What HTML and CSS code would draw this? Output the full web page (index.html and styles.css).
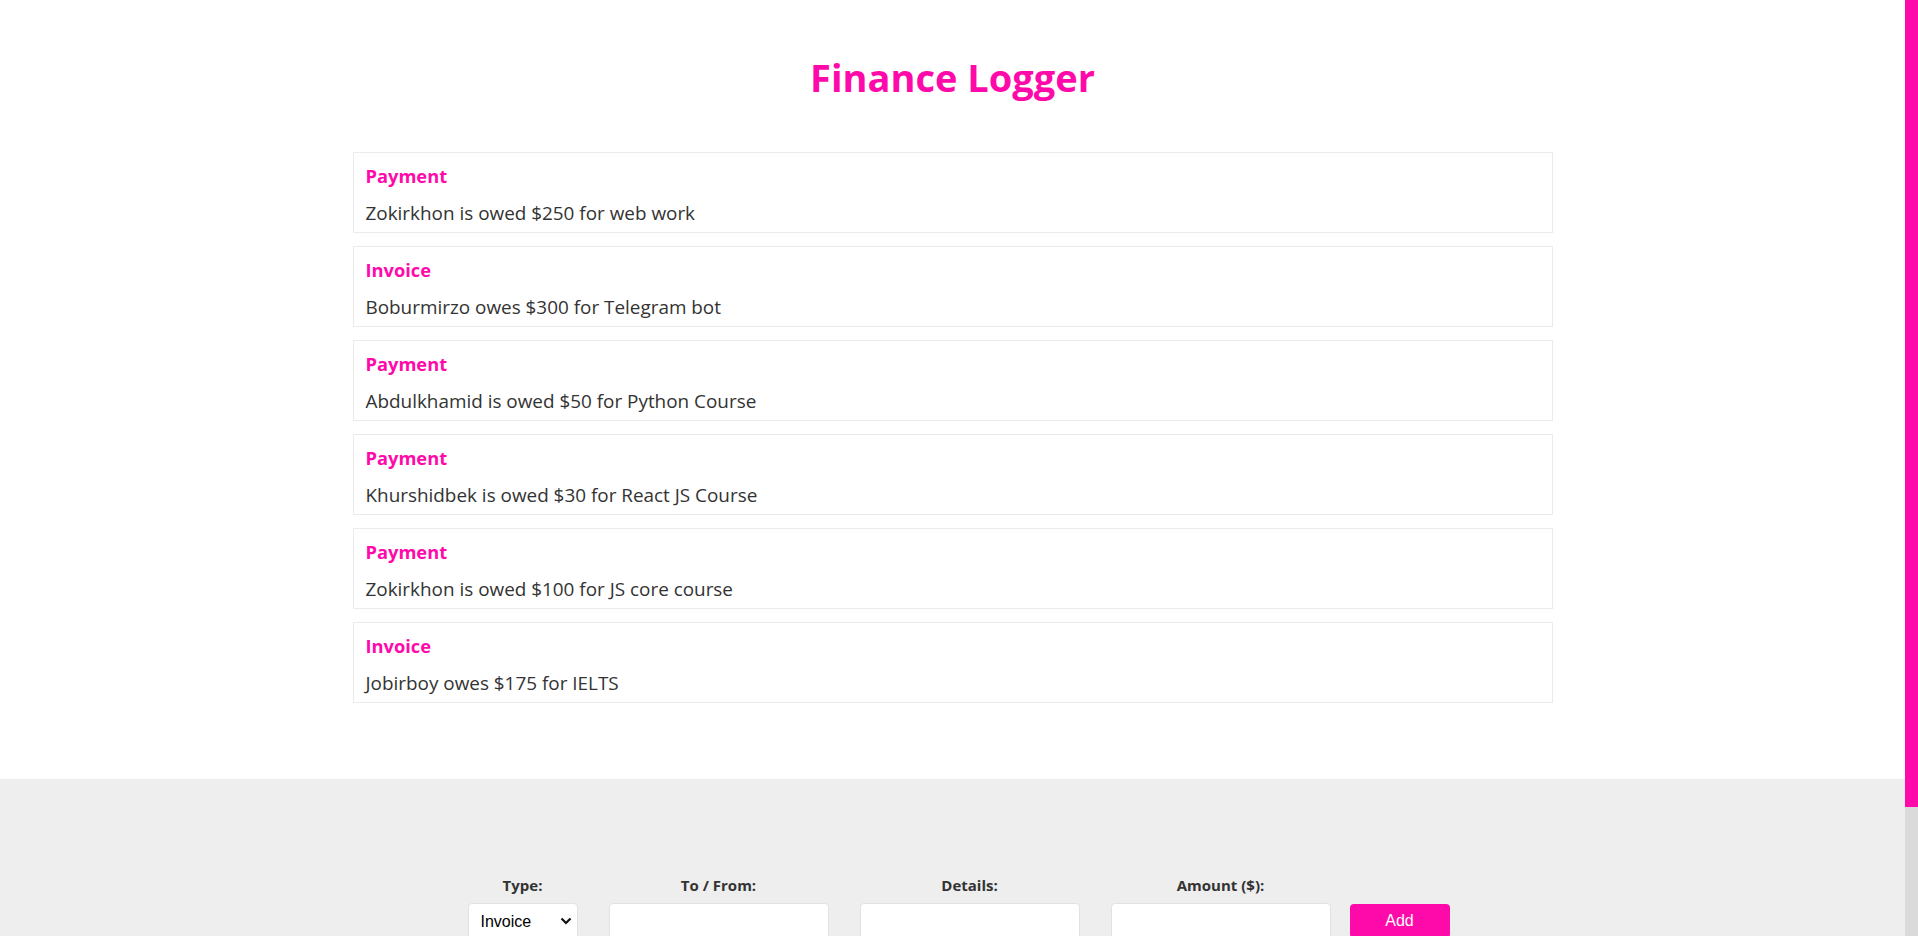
FILE: index.html
```html
<!DOCTYPE html>
<html lang="en">
<head>
<meta charset="utf-8">
<title>Finance Logger</title>
<link rel="stylesheet" href="styles.css">
</head>
<body>
  <header class="header">
    <h1 class="title">Finance Logger</h1>
  </header>
  <main class="wrapper">
    <ul class="item-list">
      <li class="item">
        <h4 class="item-type">Payment</h4>
        <p class="item-text">Zokirkhon is owed $250 for web work</p>
      </li>
      <li class="item">
        <h4 class="item-type">Invoice</h4>
        <p class="item-text">Boburmirzo owes $300 for Telegram bot</p>
      </li>
      <li class="item">
        <h4 class="item-type">Payment</h4>
        <p class="item-text">Abdulkhamid is owed $50 for Python Course</p>
      </li>
      <li class="item">
        <h4 class="item-type">Payment</h4>
        <p class="item-text">Khurshidbek is owed $30 for React JS Course</p>
      </li>
      <li class="item">
        <h4 class="item-type">Payment</h4>
        <p class="item-text">Zokirkhon is owed $100 for JS core course</p>
      </li>
      <li class="item">
        <h4 class="item-type">Invoice</h4>
        <p class="item-text">Jobirboy owes $175 for IELTS</p>
      </li>
    </ul>
  </main>
  <footer class="footer">
    <form class="new-item-form">
      <div class="fields">
        <div class="field">
          <label class="field-label" for="type">Type:</label>
          <div class="select-wrap">
            <select class="select" id="type">
              <option value="invoice">Invoice</option>
              <option value="payment">Payment</option>
            </select>
            <svg class="chevron" width="12" height="8" viewBox="0 0 12 8" aria-hidden="true"><path d="M1.5 1.5 L6 6 L10.5 1.5" fill="none" stroke="#111" stroke-width="2.2"/></svg>
          </div>
        </div>
        <div class="field">
          <label class="field-label" for="tofrom">To / From:</label>
          <input class="input" type="text" id="tofrom">
        </div>
        <div class="field">
          <label class="field-label" for="details">Details:</label>
          <input class="input" type="text" id="details">
        </div>
        <div class="field">
          <label class="field-label" for="amount">Amount ($):</label>
          <input class="input" type="number" id="amount">
        </div>
      </div>
      <button class="add-btn" type="button">Add</button>
    </form>
  </footer>
  <div class="scrollbar" aria-hidden="true"><div class="scrollbar-thumb"></div></div>
</body>
</html>
```
FILE: styles.css
```css
html {
  scrollbar-width: none;
}
::-webkit-scrollbar {
  display: none;
}

body {
  margin: 0;
  padding-right: 13px;
  font-family: "Open Sans", "Noto Sans", sans-serif;
  color: #333;
  background: #fff;
}

.scrollbar {
  position: fixed;
  top: 0;
  right: 0;
  width: 13px;
  height: 100vh;
  background: #dadada;
}
.scrollbar-thumb {
  height: 807px;
  background: #ff0aaa;
}

.header {
  padding-top: 52px;
}
.title {
  margin: 0;
  text-align: center;
  color: #ff0aaa;
  font-size: 38px;
  line-height: 50px;
  font-weight: 700;
}

.wrapper {
  max-width: 1200px;
  margin: 0 auto;
  padding: 50px 0 76px;
}
.item-list {
  list-style: none;
  margin: 0;
  padding: 0;
  display: flex;
  flex-direction: column;
  gap: 13px;
}
.item {
  border: 1px solid #ebebeb;
  padding: 11px 12px 4px;
}
.item-type {
  margin: 0;
  color: #ff0aaa;
  font-size: 18.3px;
  line-height: 24px;
  font-weight: 700;
}
.item-text {
  margin: 10px 0 0;
  font-size: 18.9px;
  line-height: 30px;
  color: #333;
}

.footer {
  background: #eeeeee;
  min-height: 306px;
  box-sizing: border-box;
  padding-top: 97px;
}
.new-item-form {
  display: flex;
  justify-content: center;
  align-items: flex-start;
  gap: 19px;
  padding-left: 12px;
}
.fields {
  display: flex;
  gap: 31px;
}
.field {
  display: flex;
  flex-direction: column;
  align-items: center;
}
.field-label {
  font-size: 15px;
  line-height: 19px;
  font-weight: 700;
  color: #333;
  margin-bottom: 8px;
}
.select-wrap {
  position: relative;
}
.select {
  appearance: none;
  -webkit-appearance: none;
  width: 110px;
  height: 36px;
  box-sizing: border-box;
  border: 1px solid #e2e2e2;
  border-radius: 4px;
  background: #fff;
  padding: 0 12px;
  font-family: "Liberation Sans", Arial, sans-serif;
  font-size: 16px;
  color: #000;
}
.chevron {
  position: absolute;
  right: 6px;
  top: 14px;
  pointer-events: none;
}
.input {
  width: 220px;
  height: 36px;
  box-sizing: border-box;
  border: 1px solid #e2e2e2;
  border-radius: 4px;
  background: #fff;
  padding: 0 10px;
  font-family: "Liberation Sans", Arial, sans-serif;
  font-size: 16px;
}
.add-btn {
  margin-top: 28px;
  width: 100px;
  height: 34px;
  border: none;
  border-radius: 4px;
  background: #ff0aaa;
  color: #fff;
  font-family: "Liberation Sans", Arial, sans-serif;
  font-size: 16px;
  padding: 0;
}
```
